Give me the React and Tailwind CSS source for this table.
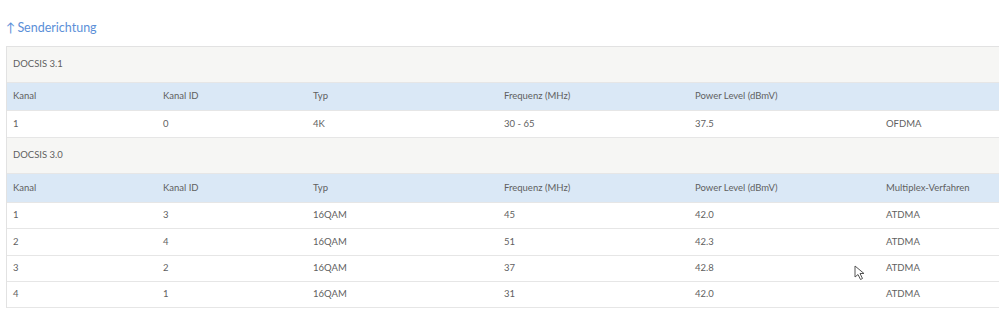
import React from "react";

const cols = ["w-[150px]", "w-[150px]", "w-[191px]", "w-[191px]", "w-[191px]", ""];
const heads = ["Kanal", "Kanal ID", "Typ", "Frequenz (MHz)", "Power Level (dBmV)", "Multiplex-Verfahren"];

const Row = ({ cells, className }) => (
  <div className={"flex items-center border-b border-[#e6e6e6] " + className}>
    {cells.map((c, i) => (
      <div key={i} className={"shrink-0 pl-[6px] " + cols[i] + (i === 5 ? " flex-1" : "")}>
        {c}
      </div>
    ))}
  </div>
);

const Group = ({ label }) => (
  <div className="h-[36px] flex items-center pl-[6px] bg-[#f6f6f4] border-b border-[#e6e6e6]">{label}</div>
);

const ds30 = [
  ["1", "3", "16QAM", "45", "42.0", "ATDMA"],
  ["2", "4", "16QAM", "51", "42.3", "ATDMA"],
  ["3", "2", "16QAM", "37", "42.8", "ATDMA"],
  ["4", "1", "16QAM", "31", "42.0", "ATDMA"],
];

export default function App() {
  return (
    <div className="relative w-[999px] h-[311px] bg-white overflow-hidden text-[#5f5f5f] text-[9.5px]" style={{ fontFamily: "Lato, 'Open Sans', sans-serif" }}>
      <div className="h-[46px] flex items-center pl-[6px] pt-[10px] text-[#5b8fd8] text-[12.5px]">
        <span className="mr-[2px]">↑</span>Senderichtung
      </div>
      <div className="ml-[6px] border-l border-t border-[#e2e2e2]">
        <Group label="DOCSIS 3.1" />
        <Row className="h-[28px] bg-[#dae8f6] border-[#d0dcea]" cells={heads.slice(0, 5).concat([""])} />
        <Row className="h-[27px] bg-white" cells={["1", "0", "4K", "30 - 65", "37.5", "OFDMA"]} />
        <Group label="DOCSIS 3.0" />
        <Row className="h-[29px] bg-[#dae8f6] border-[#d0dcea]" cells={heads} />
        {ds30.map((r, i) => (
          <Row key={i} className={(i === 1 ? "h-[27px]" : "h-[26px]") + " bg-white"} cells={r} />
        ))}
      </div>
      <svg className="absolute left-[854px] top-[265px]" width="12" height="16" viewBox="0 0 12 16">
        <path d="M1 1 L1 12 L4 9.5 L6.5 14.5 L8.5 13.5 L6 8.5 L10 8.5 Z" fill="white" stroke="#555" strokeWidth="1" strokeLinejoin="round" />
      </svg>
    </div>
  );
}
